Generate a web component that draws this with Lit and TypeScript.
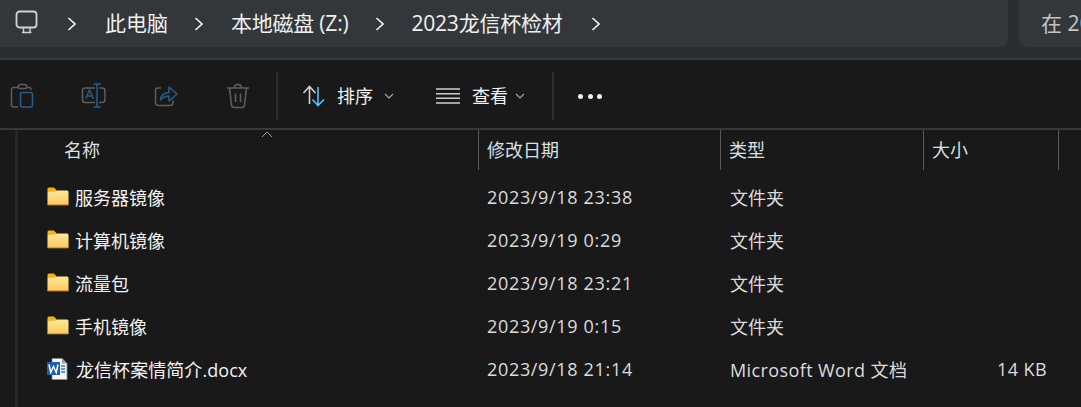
import { LitElement, html, css, svg } from "lit";
import { customElement } from "lit/decorators.js";

const chevron = svg`<svg class="chev" width="10" height="16" viewBox="0 0 10 16"><path d="M1.5 2 L8 8 L1.5 14" fill="none" stroke="#f0f0f0" stroke-width="1.7"/></svg>`;
const caret = svg`<svg class="caret" width="10" height="6" viewBox="0 0 10 6"><path d="M1 1 L5 5 L9 1" fill="none" stroke="#a8a8a8" stroke-width="1.1"/></svg>`;
const folder = svg`<svg class="ficon" width="22" height="19" viewBox="0 0 23 19" preserveAspectRatio="none">
<defs><linearGradient id="fg" x1="0" y1="0" x2="0" y2="1"><stop offset="0" stop-color="#ffe79a"/><stop offset="1" stop-color="#fcc95a"/></linearGradient></defs>
<path d="M0.5 2 Q0.5 0.5 2 0.5 H7 L10 3 V5 H0.5 Z" fill="#f5b21b"/>
<path d="M0.5 5 L9 4.5 L10.5 3.5 H21 Q22.5 3.5 22.5 5 V17 Q22.5 18 21.5 18 H1.5 Q0.5 18 0.5 17 Z" fill="url(#fg)"/>
<rect x="0.5" y="17" width="22" height="1.3" fill="#e0a030"/></svg>`;
const word = svg`<svg class="ficon" width="21" height="22" viewBox="0 0 21 22">
<path d="M5 .5 H15 L20 5.5 V21.5 H5 Z" fill="#f4f4f4" stroke="#8a8a8a" stroke-width=".8"/>
<path d="M15 .5 V5.5 H20 Z" fill="#9a9a9a"/>
<rect x="0" y="4" width="13" height="13" fill="#1f5cb8"/>
<path d="M2 6.5 L3.8 14.5 L6.5 8.5 L9.2 14.5 L11 6.5" fill="none" stroke="#fff" stroke-width="1.5"/>
<path d="M14 8 H18 M14 11 H18 M14 14 H18" stroke="#2f78d0" stroke-width="1.3"/></svg>`;

const G = "#5e5e5e";
const B = "#265d84";
const tbIcons = [
  svg`<svg width="24" height="26" viewBox="0 0 24 26" fill="none">
    <path d="M8 4.5 H3.5 Q1.5 4.5 1.5 6.5 V22 Q1.5 24 3.5 24 H8" stroke="${G}" stroke-width="1.5"/>
    <path d="M8 4.5 Q8 1.5 11 1.5 H14 Q17 1.5 17 4.5 Q17 5.5 14 5.5 H11 Q8 5.5 8 4.5 Z M17 4.5 H19 Q21 4.5 21 7" stroke="${G}" stroke-width="1.5"/>
    <rect x="10.5" y="9.5" width="12" height="14.5" rx="2" stroke="${B}" stroke-width="1.6"/></svg>`,
  svg`<svg width="26" height="26" viewBox="0 0 26 26" fill="none">
    <path d="M14 5 H4 Q1.5 5 1.5 7.5 V17 Q1.5 19.5 4 19.5 H14" stroke="${G}" stroke-width="1.5"/>
    <path d="M18 5 H21 Q24 5 24 8 V16.5 Q24 19.5 21 19.5 H18" stroke="${G}" stroke-width="1.5"/>
    <path d="M4.5 16 L8.5 7 L12.5 16 M6 13 H11" stroke="${B}" stroke-width="1.4"/>
    <path d="M12.5 1 H20 M12.5 24 H20 M16 1 V24" stroke="${B}" stroke-width="1.6"/></svg>`,
  svg`<svg width="24" height="24" viewBox="0 0 24 24" fill="none">
    <path d="M7 4 H4 Q1.5 4 1.5 6.5 V18.5 Q1.5 21.5 4.5 21.5 H16 Q19 21.5 19 18.5 V16.5" stroke="${G}" stroke-width="1.5"/>
    <path d="M6.5 16 Q7 9 15 8.5 V3 L23 10 L15 17 V12 Q10 12 6.5 16 Z" stroke="${B}" stroke-width="1.6" stroke-linejoin="round"/></svg>`,
  svg`<svg width="24" height="26" viewBox="0 0 24 26" fill="none" stroke="${G}" stroke-width="1.6">
    <path d="M1 5 H23 M8.5 5 Q8.5 1.5 12 1.5 Q15.5 1.5 15.5 5 M3.5 5 L5.5 22 Q5.8 24.5 8 24.5 H16 Q18.2 24.5 18.5 22 L20.5 5 M9.5 10.5 V19 M14.5 10.5 V19"/></svg>`,
];
const sortIcon = svg`<svg width="24" height="22" viewBox="0 0 24 22" fill="none" stroke-width="1.6">
  <path d="M1.5 8 L7.5 1.5 L13.5 8 M7.5 1.5 V19" stroke="#d0d0d0"/>
  <path d="M16 2 V20.5 M10.5 14.5 L16 20.5 L22 14.5" stroke="#4cc2ff"/></svg>`;
const viewIcon = svg`<svg width="24" height="16" viewBox="0 0 24 16" fill="none" stroke="#cfcfcf" stroke-width="1.5">
  <path d="M0 1 H24 M0 5.7 H24 M0 10.3 H24 M0 15 H24"/></svg>`;
const pcIcon = svg`<svg width="24" height="24" viewBox="0 0 24 24" fill="none" stroke="#d2d2d2" stroke-width="1.8">
  <rect x="1.5" y="1.5" width="20" height="16" rx="3"/><path d="M7 22.5 H16.5 M8.5 18 V22.5 M15 18 V22.5" stroke-width="1.4"/></svg>`;

interface Row { icon: unknown; name: string; date: string; type: string; size: string; }
const rows: Row[] = [
  { icon: folder, name: "服务器镜像", date: "2023/9/18 23:38", type: "文件夹", size: "" },
  { icon: folder, name: "计算机镜像", date: "2023/9/19 0:29", type: "文件夹", size: "" },
  { icon: folder, name: "流量包", date: "2023/9/18 23:21", type: "文件夹", size: "" },
  { icon: folder, name: "手机镜像", date: "2023/9/19 0:15", type: "文件夹", size: "" },
  { icon: word, name: "龙信杯案情简介.docx", date: "2023/9/18 21:14", type: "Microsoft Word 文档", size: "14 KB" },
];

@customElement("app-root")
export class AppRoot extends LitElement {
  static styles = css`
    :host { display: block; width: 1081px; height: 407px; overflow: hidden; background: #191919; color: #fff;
      font-family: "Open Sans", "Noto Sans CJK SC", sans-serif; font-size: 18px; }
    .top { height: 58px; background: #292d2f; border-bottom: 2px solid #383838; display: flex; gap: 11px; }
    .crumbs { width: 1008px; flex: none; height: 47px; background: #33373a; border-radius: 0 0 8px 0; display: flex; align-items: center; box-sizing: border-box; font-size: 21px; color: #f0f0f0; }
    .pc { width: 24px; height: 24px; margin-left: 15px; display: flex; margin-top: -3px; }
    .chev { flex: none; }
    .cw { display: flex; }
    .c1 { margin-left: 28px; } .t1 { margin-left: 28px; }
    .c2 { margin-left: 26px; } .t2 { margin-left: 27px; letter-spacing: -.22px; }
    .c3 { margin-left: 27px; } .t3 { margin-left: 26px; letter-spacing: -.2px; }
    .c4 { margin-left: 28px; }
    .crumbs span { line-height: 47px; margin-top: -1px; white-space: nowrap; }
    .search { flex: 1; height: 47px; background: #33373a; border-radius: 0 0 0 8px; padding-left: 22px; font-size: 21px; line-height: 46px; color: #c4c4c4; white-space: nowrap; overflow: hidden; }
    .tools { height: 64px; padding-top: 4px; border-bottom: 2px solid #383838; display: flex; align-items: center; }
    .tb-icons { display: flex; width: 276px; flex: none; box-sizing: border-box; padding-left: 10px; align-items: center; }
    .tb-slot { flex: none; display: flex; }
    .w1 { width: 71px; } .w2 { width: 73px; } .w3 { width: 72px; }
    .sep { width: 2px; height: 48px; background: #2c2c2c; flex: none; }
    .btn { display: flex; align-items: center; }
    .b1 { margin-left: 24px; } .b1 .lbl { margin-left: 11px; } .b1 .caret { margin-left: 11px; }
    .b2 { margin-left: 42px; } .b2 .lbl { margin-left: 12px; } .b2 .caret { margin-left: 7px; }
    .lbl { color: #f2f2f2; line-height: 24px; }
    .s2 { margin-left: 27px; }
    .more { margin-left: 24px; display: flex; gap: 4.5px; }
    .more i { width: 5px; height: 5px; border-radius: 50%; background: #f0f0f0; display: block; }
    .list { position: relative; height: 277px; }
    .rail { position: absolute; left: 15px; top: 0; width: 3px; height: 100%; background: #262626; }
    .sort { position: absolute; left: 261px; top: 1px; }
    .cols { display: grid; grid-template-columns: 478px 242px 203px 135px 23px; height: 40px; }
    .hd { display: flex; align-items: center; color: #d8e0e6; font-size: 18px; padding-left: 9px; }
    .hd span { position: relative; top: -1px; }
    .hd.first { padding-left: 64px; }
    .col-line { position: relative; }
    .col-line::before { content: ""; position: absolute; left: 0; top: 0; width: 1px; height: 40px; background: #5a5a5a; }
    .rows { padding-top: 5px; }
    .row { display: grid; grid-template-columns: 478px 242px 193px 134px; height: 43px; align-items: center; font-size: 18px; color: #f2f2f2; white-space: nowrap; }
    .name { display: flex; align-items: center; padding-left: 47px; }
    .ficon { flex: none; }
    .name-t { margin-left: 6px; }
    .name.doc .name-t { margin-left: 8px; letter-spacing: .06px; }
    .date { padding-left: 9px; color: #dcdcdc; letter-spacing: .67px; }
    .type { padding-left: 10px; color: #dcdcdc; }
    .type.wide { letter-spacing: .4px; }
    .size { text-align: right; color: #dcdcdc; letter-spacing: .4px; }
  `;
  render() {
    return html`
      <div class="top">
        <div class="crumbs">
          <div class="pc">${pcIcon}</div>
          <div class="cw c1">${chevron}</div><span class="t1">此电脑</span>
          <div class="cw c2">${chevron}</div><span class="t2">本地磁盘 (Z:)</span>
          <div class="cw c3">${chevron}</div><span class="t3">2023龙信杯检材</span>
          <div class="cw c4">${chevron}</div>
        </div>
        <div class="search">在 2023龙信杯检材 中搜索</div>
      </div>
      <div class="tools">
        <div class="tb-icons">${tbIcons.map((icon, i) => html`<div class="tb-slot w${i + 1}">${icon}</div>`)}</div>
        <div class="sep"></div>
        <div class="btn b1">${sortIcon}<span class="lbl">排序</span>${caret}</div>
        <div class="btn b2">${viewIcon}<span class="lbl">查看</span>${caret}</div>
        <div class="sep s2"></div>
        <div class="more"><i></i><i></i><i></i></div>
      </div>
      <div class="list">
        <div class="rail"></div>
        <svg class="sort" width="12" height="7" viewBox="0 0 12 7"><path d="M1 6 L6 1 L11 6" fill="none" stroke="#9a9a9a" stroke-width="1"/></svg>
        <div class="cols">
          <div class="hd first"><span>名称</span></div>
          <div class="hd col-line"><span>修改日期</span></div>
          <div class="hd col-line"><span>类型</span></div>
          <div class="hd col-line"><span>大小</span></div>
          <div class="col-line"></div>
        </div>
        <div class="rows">
          ${rows.map((r) => html`<div class="row">
            <div class="name ${r.size ? "doc" : ""}">${r.icon}<span class="name-t">${r.name}</span></div>
            <div class="date">${r.date}</div>
            <div class="type ${r.size ? "wide" : ""}">${r.type}</div>
            <div class="size">${r.size}</div>
          </div>`)}
        </div>
      </div>`;
  }
}
